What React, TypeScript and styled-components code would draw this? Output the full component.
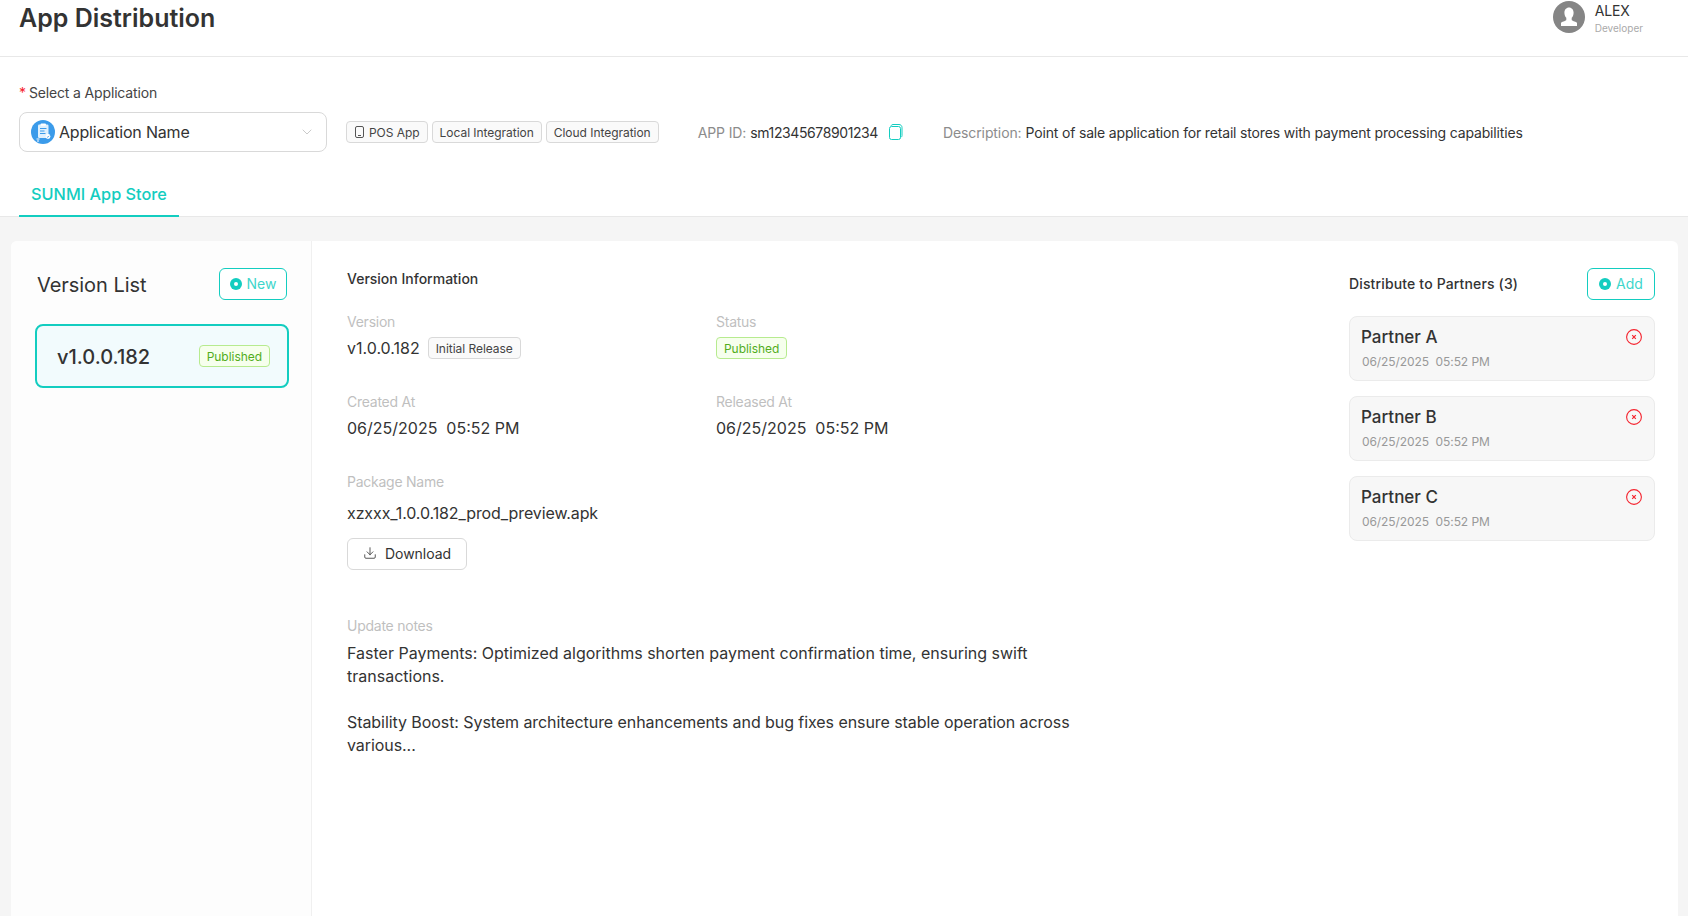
import React from "react";
import styled, { createGlobalStyle } from "styled-components";
import { ChevronDown, Download } from "lucide-react";

const GlobalStyle = createGlobalStyle`
  html, body {
    margin: 0;
    padding: 0;
    background: #fff;
    font-family: Inter, "Noto Sans", sans-serif;
    color: #333;
  }
  * {
    box-sizing: border-box;
  }
`;

const TEAL = "#13cdc0";

const Page = styled.div`
  display: flex;
  flex-direction: column;
  height: 100vh;
  overflow: hidden;
  background: #f5f5f5;
`;

const TopSection = styled.div`
  background: #fff;
`;

const Header = styled.header`
  display: flex;
  justify-content: space-between;
  align-items: flex-start;
  height: 57px;
  padding: 0 45px 0 19px;
  border-bottom: 1px solid #e8e8e8;
`;

const Title = styled.h1`
  margin: 1px 0 0;
  font-size: 25px;
  line-height: 34px;
  font-weight: 600;
  color: #333;
`;

const UserBlock = styled.div`
  display: flex;
  gap: 10px;
  padding-top: 1px;
`;

const UserName = styled.div`
  font-size: 14px;
  line-height: 20px;
  letter-spacing: -0.2px;
  color: #333;
`;

const UserRole = styled.div`
  font-size: 10px;
  line-height: 14px;
  color: #aaa;
`;

const AppSection = styled.div`
  padding: 26px 19px 0;
`;

const FieldLabel = styled.div`
  font-size: 14px;
  line-height: 20px;
  letter-spacing: -0.15px;
  color: #444;

  &::before {
    content: "*";
    color: #f5222d;
    margin-right: 3px;
  }
`;

const AppRow = styled.div`
  display: flex;
  align-items: center;
  margin-top: 9px;
`;

const SelectBox = styled.div`
  display: flex;
  align-items: center;
  gap: 4px;
  width: 308px;
  height: 40px;
  padding: 0 11px 0 11px;
  background: #fff;
  border: 1px solid #d9d9d9;
  border-radius: 8px;
  font-size: 16px;
  letter-spacing: -0.2px;
  color: #333;
`;

const SelectText = styled.span`
  flex: 1;
`;

const TagGroup = styled.div`
  display: flex;
  gap: 4px;
  margin-left: 19px;
`;

const Tag = styled.span`
  display: inline-flex;
  align-items: center;
  gap: 4px;
  height: 22px;
  padding: 0 7px;
  font-size: 12px;
  letter-spacing: -0.04px;
  color: #444;
  background: #fafafa;
  border: 1px solid #d9d9d9;
  border-radius: 4px;
`;

const GreenTag = styled(Tag)`
  color: #52ad1c;
  background: #f6ffed;
  border-color: #b7eb8f;
`;

const MetaItem = styled.div<{ $left: number; $spacing?: number }>`
  display: flex;
  align-items: center;
  margin-left: ${(p) => p.$left}px;
  font-size: 14px;
  letter-spacing: ${(p) => p.$spacing ?? 0}px;
  color: #333;
`;

const MetaKey = styled.span`
  color: #8c8c8c;
  letter-spacing: -0.1px;
  margin-right: 4px;
`;

const TabBar = styled.div`
  display: flex;
  margin-top: 20px;
  margin-left: -19px;
  margin-right: -19px;
  padding-left: 19px;
  border-bottom: 1px solid #e8e8e8;
  height: 45px;
`;

const TabItem = styled.div`
  height: 45px;
  padding: 10px 12px 0 12px;
  font-size: 16.3px;
  line-height: 24px;
  font-weight: 500;
  color: ${TEAL};
  border-bottom: 2px solid ${TEAL};
`;

const Panel = styled.main`
  flex: 1;
  display: flex;
  margin: 24px 10px 0 11px;
  background: #fff;
  border-radius: 6px 6px 0 0;
  overflow: hidden;
`;

const VersionColumn = styled.aside`
  width: 301px;
  padding: 27px 22px 0 24px;
  background: #fdfdfd;
  border-right: 1px solid #f0f0f0;
`;

const ColumnHead = styled.div`
  display: flex;
  justify-content: space-between;
  align-items: center;
  height: 32px;
`;

const ListTitle = styled.h2`
  margin: 2px 0 0 2px;
  font-size: 20px;
  font-weight: 400;
  letter-spacing: -0.05px;
  color: #333;
`;

const OutlineButton = styled.button<{ $shift?: number }>`
  display: inline-flex;
  align-items: center;
  gap: 5px;
  height: 32px;
  width: 68px;
  justify-content: center;
  margin-right: ${(p) => p.$shift ?? 0}px;
  padding: 0 0 1px;
  background: #fff;
  border: 1px solid ${TEAL};
  border-radius: 6px;
  font: inherit;
  font-size: 14px;
  color: #3ed6cb;
`;

const VersionCard = styled.div`
  display: flex;
  justify-content: space-between;
  align-items: center;
  height: 64px;
  margin-top: 24px;
  padding: 0 17px 0 20px;
  background: #f2fbfd;
  border: 2px solid ${TEAL};
  border-radius: 8px;
`;

const VersionName = styled.span`
  padding-top: 1px;
  font-size: 20px;
  font-weight: 500;
  color: #333;
`;

const InfoColumn = styled.section`
  flex: 1;
  padding: 28px 0 0 35px;
`;

const SectionTitle = styled.h3`
  margin: 0;
  font-size: 14px;
  line-height: 20px;
  font-weight: 500;
  color: #333;
`;

const InfoGrid = styled.div`
  display: grid;
  grid-template-columns: 369px 369px;
  row-gap: 31px;
  margin-top: 23px;
`;

const InfoLabel = styled.div`
  font-size: 14px;
  line-height: 20px;
  letter-spacing: -0.25px;
  color: #bfbfbf;
`;

const InfoValue = styled.div`
  display: flex;
  align-items: center;
  gap: 8px;
  height: 26px;
  margin-top: 3px;
  font-size: 16px;
  color: #333;
`;

const PackageBlock = styled.div`
  margin-top: 31px;
`;

const PackageValue = styled(InfoValue)`
  margin-top: 8px;
  letter-spacing: -0.1px;
`;

const DownloadButton = styled.button`
  display: flex;
  align-items: center;
  gap: 8px;
  width: 120px;
  height: 32px;
  margin-top: 12px;
  padding: 0 0 2px 15px;
  background: #fff;
  border: 1px solid #d9d9d9;
  border-radius: 6px;
  font: inherit;
  font-size: 14px;
  letter-spacing: -0.03px;
  color: #333;
`;

const NotesBlock = styled.div`
  margin-top: 46px;
  width: 735px;
`;

const NotesText = styled.p<{ $spacing?: number }>`
  margin: 6px 0 23px;
  font-size: 16px;
  line-height: 23px;
  letter-spacing: ${(p) => p.$spacing ?? 0}px;
  color: #333;
`;

const PartnerColumn = styled.aside`
  width: 329px;
  padding: 27px 23px 0 0;
`;

const PartnerTitle = styled.span`
  margin-top: -2px;
  font-size: 14px;
  font-weight: 500;
  letter-spacing: 0.15px;
  color: #333;
`;

const PartnerList = styled.div`
  display: flex;
  flex-direction: column;
  gap: 15px;
  margin-top: 16px;
`;

const PartnerCard = styled.div`
  position: relative;
  height: 65px;
  padding: 8px 11px 0;
  background: #f7f7f7;
  border: 1px solid #ebebeb;
  border-radius: 8px;
`;

const PartnerName = styled.div`
  font-size: 17px;
  line-height: 24px;
  font-weight: 500;
  color: #333;
`;

const PartnerDate = styled.div`
  margin-top: 4px;
  padding-left: 1px;
  font-size: 12px;
  line-height: 18px;
  letter-spacing: -0.08px;
  color: #999;
`;

const RemoveButton = styled.span`
  position: absolute;
  top: 12px;
  right: 12px;
  display: flex;
`;

const AppIcon = () => (
  <svg width="24" height="24" viewBox="0 0 24 24">
    <circle cx="12" cy="12" r="12" fill="#3b9bea" />
    <rect x="7" y="4.5" width="10.5" height="13.5" rx="1.2" fill="#dff0fd" />
    <rect x="9.5" y="3.5" width="5.5" height="2.2" rx="1" fill="#fff" />
    <path d="M9 8.5h6.5M9 11h4.5M9 13.5h5.5" stroke="#3b9bea" strokeWidth="1" />
    <circle cx="17" cy="16.5" r="2.4" fill="#fff" />
    <path d="M15.9 16.5l.9.9 1.4-1.6" stroke="#3b9bea" strokeWidth=".8" fill="none" />
    <path d="M5.5 19h3M6 21h2" stroke="#fff" strokeWidth="1" />
  </svg>
);

const AvatarIcon = () => (
  <svg width="32" height="32" viewBox="0 0 32 32">
    <circle cx="16" cy="16" r="16" fill="#858585" />
    <path
      d="M16 6.5c2.8 0 4.6 2.3 4.6 5.2 0 2.1-.8 4-1.9 5.1v2.2c0 .8 3.4 1.3 5.3 2.8V25H8v-3.2c1.9-1.5 5.3-2 5.3-2.8v-2.2c-1.1-1.1-1.9-3-1.9-5.1 0-2.9 1.8-5.2 4.6-5.2z"
      fill="#fff"
    />
  </svg>
);

const PhoneIcon = () => (
  <svg width="11" height="12" viewBox="0 0 11 12" fill="none" stroke="#555" strokeWidth="1">
    <rect x="1.5" y="0.5" width="8" height="11" rx="1.5" />
    <path d="M4 9.5h3" />
  </svg>
);

const CopyIcon = () => (
  <svg width="16" height="16" viewBox="0 0 16 16" fill="none" stroke={TEAL} strokeWidth="1">
    <rect x="1.5" y="2.5" width="11" height="13" rx="2" />
    <path d="M3 1.8c.3-.8 1-1.3 2-1.3h6c1.6 0 3 1.2 3 3v8c0 .8-.4 1.4-1 1.8" />
  </svg>
);

const AddIcon = () => (
  <svg width="12" height="12" viewBox="0 0 12 12">
    <circle cx="6" cy="6" r="6" fill={TEAL} />
    <circle cx="6" cy="6" r="2" fill="#fff" />
  </svg>
);

const RemoveIcon = () => (
  <svg width="16" height="16" viewBox="0 0 16 16" fill="none" stroke="#f5222d">
    <circle cx="8" cy="8" r="7.4" strokeWidth="1.1" />
    <path d="M6.2 6.2l3.6 3.6M9.8 6.2l-3.6 3.6" strokeWidth="1.2" />
  </svg>
);

const partners = ["Partner A", "Partner B", "Partner C"];

const App: React.FC = () => {
  return (
    <Page>
      <GlobalStyle />
      <TopSection>
        <Header>
          <Title>App Distribution</Title>
          <UserBlock>
            <AvatarIcon />
            <div>
              <UserName>ALEX</UserName>
              <UserRole>Developer</UserRole>
            </div>
          </UserBlock>
        </Header>
        <AppSection>
          <FieldLabel>Select a Application</FieldLabel>
          <AppRow>
            <SelectBox>
              <AppIcon />
              <SelectText>Application Name</SelectText>
              <ChevronDown size={16} color="#bfbfbf" strokeWidth={1.25} />
            </SelectBox>
            <TagGroup>
              <Tag>
                <PhoneIcon />
                POS App
              </Tag>
              <Tag>Local Integration</Tag>
              <Tag>Cloud Integration</Tag>
            </TagGroup>
            <MetaItem $left={39} $spacing={-0.4}>
              <MetaKey>APP ID:</MetaKey>
              sm12345678901234
            </MetaItem>
            <MetaItem $left={10}>
              <CopyIcon />
            </MetaItem>
            <MetaItem $left={39} $spacing={-0.17}>
              <MetaKey>Description:</MetaKey>
              Point of sale application for retail stores with payment processing capabilities
            </MetaItem>
          </AppRow>
          <TabBar>
            <TabItem>SUNMI App Store</TabItem>
          </TabBar>
        </AppSection>
      </TopSection>
      <Panel>
        <VersionColumn>
          <ColumnHead>
            <ListTitle>Version List</ListTitle>
            <OutlineButton $shift={2}>
              <AddIcon />
              New
            </OutlineButton>
          </ColumnHead>
          <VersionCard>
            <VersionName>v1.0.0.182</VersionName>
            <GreenTag>Published</GreenTag>
          </VersionCard>
        </VersionColumn>
        <InfoColumn>
          <SectionTitle>Version Information</SectionTitle>
          <InfoGrid>
            <div>
              <InfoLabel>Version</InfoLabel>
              <InfoValue>
                v1.0.0.182
                <Tag>Initial Release</Tag>
              </InfoValue>
            </div>
            <div>
              <InfoLabel>Status</InfoLabel>
              <InfoValue>
                <GreenTag>Published</GreenTag>
              </InfoValue>
            </div>
            <div>
              <InfoLabel>Created At</InfoLabel>
              <InfoValue>06/25/2025&nbsp;&nbsp;05:52 PM</InfoValue>
            </div>
            <div>
              <InfoLabel>Released At</InfoLabel>
              <InfoValue>06/25/2025&nbsp;&nbsp;05:52 PM</InfoValue>
            </div>
          </InfoGrid>
          <PackageBlock>
            <InfoLabel>Package Name</InfoLabel>
            <PackageValue>xzxxx_1.0.0.182_prod_preview.apk</PackageValue>
            <DownloadButton>
              <Download size={14} strokeWidth={1.4} />
              Download
            </DownloadButton>
          </PackageBlock>
          <NotesBlock>
            <InfoLabel>Update notes</InfoLabel>
            <NotesText>
              Faster Payments: Optimized algorithms shorten payment confirmation time, ensuring swift transactions.
            </NotesText>
            <NotesText $spacing={-0.07}>
              Stability Boost: System architecture enhancements and bug fixes ensure stable operation across various...
            </NotesText>
          </NotesBlock>
        </InfoColumn>
        <PartnerColumn>
          <ColumnHead>
            <PartnerTitle>Distribute to Partners (3)</PartnerTitle>
            <OutlineButton>
              <AddIcon />
              Add
            </OutlineButton>
          </ColumnHead>
          <PartnerList>
            {partners.map((name) => (
              <PartnerCard key={name}>
                <PartnerName>{name}</PartnerName>
                <PartnerDate>06/25/2025&nbsp;&nbsp;05:52 PM</PartnerDate>
                <RemoveButton>
                  <RemoveIcon />
                </RemoveButton>
              </PartnerCard>
            ))}
          </PartnerList>
        </PartnerColumn>
      </Panel>
    </Page>
  );
};

export default App;
